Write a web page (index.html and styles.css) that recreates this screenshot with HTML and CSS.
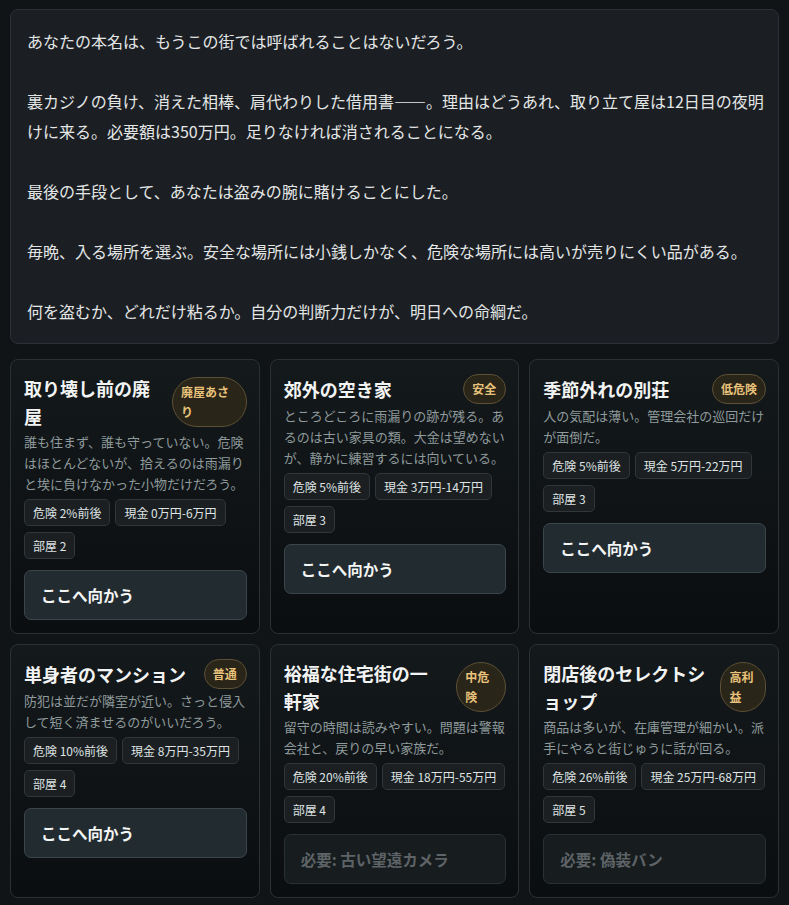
FILE: index.html
```html
<!DOCTYPE html>
<html lang="ja">
<head>
  <meta charset="UTF-8">
  <meta name="viewport" content="width=device-width, initial-scale=1.0">
  <title>夜の仕事 - 場所選び</title>
  <link rel="stylesheet" href="styles.css">
</head>
<body>
  <div class="container">
    <div class="intro">
      <p>あなたの本名は、もうこの街では呼ばれることはないだろう。</p>
      <p>裏カジノの負け、消えた相棒、肩代わりした借用書——。理由はどうあれ、取り立て屋は12日目の夜明けに来る。必要額は350万円。足りなければ消されることになる。</p>
      <p>最後の手段として、あなたは盗みの腕に賭けることにした。</p>
      <p>毎晩、入る場所を選ぶ。安全な場所には小銭しかなく、危険な場所には高いが売りにくい品がある。</p>
      <p>何を盗むか、どれだけ粘るか。自分の判断力だけが、明日への命綱だ。</p>
    </div>
    <div id="places" class="places">
      <!-- 場所カードはここに並ぶ -->
    </div>
  </div>

  <script>
    const PLACES = [
      { name: "取り壊し前の廃屋", tag: "廃屋あさり", desc: "誰も住まず、誰も守っていない。危険はほとんどないが、拾えるのは雨漏りと埃に負けなかった小物だけだろう。", risk: 2, cash: "0万円-6万円", rooms: 2 },
      { name: "郊外の空き家", tag: "安全", desc: "ところどころに雨漏りの跡が残る。あるのは古い家具の類。大金は望めないが、静かに練習するには向いている。", risk: 5, cash: "3万円-14万円", rooms: 3 },
      { name: "季節外れの別荘", tag: "低危険", desc: "人の気配は薄い。管理会社の巡回だけが面倒だ。", risk: 5, cash: "5万円-22万円", rooms: 3 },
      { name: "単身者のマンション", tag: "普通", desc: "防犯は並だが隣室が近い。さっと侵入して短く済ませるのがいいだろう。", risk: 10, cash: "8万円-35万円", rooms: 4 },
      { name: "裕福な住宅街の一軒家", tag: "中危険", desc: "留守の時間は読みやすい。問題は警報会社と、戻りの早い家族だ。", risk: 20, cash: "18万円-55万円", rooms: 4, needs: "古い望遠カメラ" },
      { name: "閉店後のセレクトショップ", tag: "高利益", desc: "商品は多いが、在庫管理が細かい。派手にやると街じゅうに話が回る。", risk: 26, cash: "25万円-68万円", rooms: 5, needs: "偽装バン" }
    ];

    const list = document.getElementById('places');
    PLACES.forEach(place => {
      const card = document.createElement('div');
      card.classList.add('card');
      const action = place.needs
        ? `<button class="go locked" disabled>必要: ${place.needs}</button>`
        : `<button class="go">ここへ向かう</button>`;
      card.innerHTML = `
        <div class="card-head">
          <h3>${place.name}</h3>
          <span class="badge">${place.tag}</span>
        </div>
        <p class="desc">${place.desc}</p>
        <div class="stats">
          <span class="stat">危険 ${place.risk}%前後</span>
          <span class="stat">現金 ${place.cash}</span>
          <span class="stat">部屋 ${place.rooms}</span>
        </div>
        ${action}
      `;
      list.appendChild(card);
    });
  </script>
</body>
</html>
```

FILE: styles.css
```css
html, body {
  background: #111417;
}
body {
  font-family: "Noto Sans CJK JP", "Noto Sans", sans-serif;
  color: #e4e6e6;
  margin: 0;
  padding: 0;
}
.container {
  padding: 9px 10px 10px 10px;
}
.intro {
  background: #1b1f23;
  border: 1px solid #2b3136;
  border-radius: 8px;
  padding: 16px 10px 17px 16px;
  margin-bottom: 15px;
  font-size: 16px;
  line-height: 30px;
}
.intro p {
  margin: 0 0 30px 0;
}
.intro p:last-child {
  margin-bottom: 0;
}
.places {
  display: grid;
  grid-template-columns: repeat(3, 1fr);
  gap: 10px;
}
.card {
  background: linear-gradient(#14191c, #0b0e10);
  border: 1px solid #2a3034;
  border-radius: 8px;
  padding: 14px 12px 13px 13px;
  min-width: 0;
}
.card-head {
  display: flex;
  align-items: center;
  justify-content: space-between;
  gap: 12px;
  margin-bottom: 1px;
}
.card-head h3 {
  margin: 0;
  font-size: 18px;
  line-height: 28px;
  font-weight: 700;
  color: #f2f3f3;
  line-break: anywhere;
}
.badge {
  box-sizing: border-box;
  min-width: 43px;
  padding: 4px 8px;
  border: 1px solid #5c5035;
  border-radius: 999px;
  background: #2a2519;
  color: #e8c27a;
  font-size: 12px;
  line-height: 20px;
  font-weight: 700;
}
.desc {
  margin: 0;
  font-size: 13px;
  line-height: 21px;
  color: #8e9a9b;
}
.stats {
  display: flex;
  flex-wrap: wrap;
  gap: 6px 5px;
  margin-top: 5px;
}
.stat {
  padding: 4px 8px;
  border: 1px solid #30363a;
  border-radius: 5px;
  background: #1b1f22;
  color: #dfe3e3;
  font-size: 12px;
  line-height: 17px;
}
.go {
  display: block;
  width: 100%;
  height: 50px;
  margin-top: 11px;
  padding: 0 16px;
  text-align: left;
  font-family: inherit;
  font-size: 15.5px;
  font-weight: 700;
  color: #f4f5f5;
  background: #222b30;
  border: 1px solid #3b464c;
  border-radius: 7px;
}
.go.locked {
  color: #5d6366;
  background: #171c1f;
  border-color: #2a3135;
}
```
